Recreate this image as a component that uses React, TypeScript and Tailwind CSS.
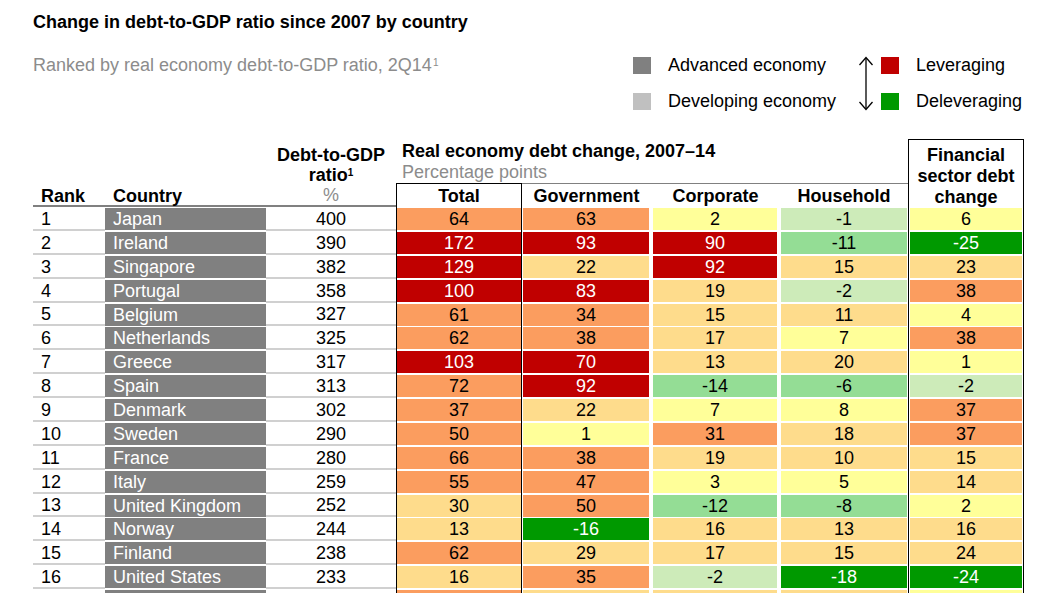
import React from "react";

type Tone = "red" | "orange" | "lorange" | "yellow" | "lgreen" | "mgreen" | "dgreen";

const TONES: Record<Tone, string> = {
  red: "bg-[#c00000] text-white",
  orange: "bg-[#fb9d5f] text-black",
  lorange: "bg-[#fedc8c] text-black",
  yellow: "bg-[#ffff99] text-black",
  lgreen: "bg-[#cdebb9] text-black",
  mgreen: "bg-[#94dd95] text-black",
  dgreen: "bg-[#009900] text-white",
};

function toneFor(v: number, redFrom = 70): Tone {
  if (v >= redFrom) return "red";
  if (v >= 31) return "orange";
  if (v >= 10) return "lorange";
  if (v >= 1) return "yellow";
  if (v >= -5) return "lgreen";
  if (v >= -15) return "mgreen";
  return "dgreen";
}

// rank, country, ratio, total, government, corporate, household, financial
const rows: [number, string, number, number, number, number, number, number][] = [
  [1, "Japan", 400, 64, 63, 2, -1, 6],
  [2, "Ireland", 390, 172, 93, 90, -11, -25],
  [3, "Singapore", 382, 129, 22, 92, 15, 23],
  [4, "Portugal", 358, 100, 83, 19, -2, 38],
  [5, "Belgium", 327, 61, 34, 15, 11, 4],
  [6, "Netherlands", 325, 62, 38, 17, 7, 38],
  [7, "Greece", 317, 103, 70, 13, 20, 1],
  [8, "Spain", 313, 72, 92, -14, -6, -2],
  [9, "Denmark", 302, 37, 22, 7, 8, 37],
  [10, "Sweden", 290, 50, 1, 31, 18, 37],
  [11, "France", 280, 66, 38, 19, 10, 15],
  [12, "Italy", 259, 55, 47, 3, 5, 14],
  [13, "United Kingdom", 252, 30, 50, -12, -8, 2],
  [14, "Norway", 244, 13, -16, 16, 13, 16],
  [15, "Finland", 238, 62, 29, 17, 15, 24],
  [16, "United States", 233, 16, 35, -2, -18, -24],
  [17, "South Korea", 231, 45, 16, 14, 15, 2],
];

function Cell({ v, redFrom, className }: { v: number; redFrom?: number; className: string }) {
  return (
    <div className={`flex flex-col pt-[1px] pb-[2px] ${className}`}>
      <div className={`flex flex-1 items-center justify-center pt-[1px] leading-[21px] ${TONES[toneFor(v, redFrom)]}`}>{v}</div>
    </div>
  );
}

function Arrow() {
  return (
    <svg width="16" height="57" viewBox="0 0 16 57" className="shrink-0">
      <path d="M8 3 V54" stroke="#000" strokeWidth="1.3" fill="none" />
      <path d="M1.5 10 L8 2.5 L14.5 10" stroke="#000" strokeWidth="1.3" fill="none" />
      <path d="M1.5 47 L8 54.5 L14.5 47" stroke="#000" strokeWidth="1.3" fill="none" />
    </svg>
  );
}

export default function App() {
  return (
    <div className="h-[593px] w-[1047px] overflow-hidden bg-white font-['Liberation_Sans',Arial,sans-serif] text-[18px] text-black">
      <div className="pl-[33px] pt-[12px]">
        <h1 className="font-bold leading-[21px]">Change in debt-to-GDP ratio since 2007 by country</h1>

        <div className="mt-[22px] flex">
          <p className="w-[600px] leading-[21px] text-[#8c8c8c]">
            Ranked by real economy debt-to-GDP ratio, 2Q14
            <sup className="ml-[1px] text-[10px]">1</sup>
          </p>
          <div className="flex w-[225px] flex-col gap-[15px]">
            <div className="flex h-[21px] items-center">
              <span className="h-[17px] w-[18px] bg-[#808080]" />
              <span className="ml-[17px] leading-[21px]">Advanced economy</span>
            </div>
            <div className="flex h-[21px] items-center">
              <span className="h-[17px] w-[18px] bg-[#c0c0c0]" />
              <span className="ml-[17px] leading-[21px]">Developing economy</span>
            </div>
          </div>
          <Arrow />
          <div className="ml-[7px] flex flex-col gap-[15px]">
            <div className="flex h-[21px] items-center">
              <span className="h-[17px] w-[18px] bg-[#c00000]" />
              <span className="ml-[17px] leading-[21px]">Leveraging</span>
            </div>
            <div className="flex h-[21px] items-center">
              <span className="h-[17px] w-[18px] bg-[#009900]" />
              <span className="ml-[17px] leading-[21px]">Deleveraging</span>
            </div>
          </div>
        </div>

        {/* table header */}
        <div className="mt-[27px] flex h-[68px]">
          <div className="flex w-[72px] items-end border-b-2 border-[#808080] pl-[8px] font-bold leading-[18px]">Rank</div>
          <div className="flex w-[161px] items-end border-b-2 border-[#808080] pl-[8px] font-bold leading-[18px]">Country</div>
          <div className="flex w-[130px] flex-col items-center justify-end border-b-2 border-[#808080] leading-[20px]">
            <span className="font-bold">Debt-to-GDP</span>
            <span className="font-bold">
              ratio<sup className="text-[10px]">1</sup>
            </span>
            <span className="text-[#8c8c8c]">%</span>
          </div>
          <div className="flex w-[512px] flex-col">
            <div className="h-[44px] pl-[6px] pt-[2px] leading-[21px]">
              <div className="font-bold">Real economy debt change, 2007–14</div>
              <div className="text-[#8c8c8c]">Percentage points</div>
            </div>
            <div className="flex h-[24px] pt-[1px] font-bold leading-[22px]">
              <div className="-mt-[1px] w-[126px] border-x border-t border-black pt-[1px] text-center">Total</div>
              <div className="-mt-[1px] w-[129px] border-t border-[#808080] pt-[1px] text-center">Government</div>
              <div className="-mt-[1px] w-[129px] border-t border-[#808080] pt-[1px] text-center">Corporate</div>
              <div className="-mt-[1px] w-[128px] border-t border-[#808080] pt-[1px] text-center">Household</div>
            </div>
          </div>
          <div className="flex w-[116px] flex-col items-center border-x border-t border-black pt-[4.5px] font-bold leading-[21px]">
            <span>Financial</span>
            <span>sector debt</span>
            <span>change</span>
          </div>
        </div>

        {/* table body */}
        {rows.map(([rank, country, ratio, total, gov, corp, house, fin]) => (
          <div key={rank} className="flex h-[23.875px]">
            <div className="flex w-[72px] items-center border-b-2 border-[#d0d0d0] pl-[8px] pt-[3px] leading-[21px]">{rank}</div>
            <div className="flex w-[161px] flex-col pt-[1px] pb-[2px]">
              <div className="flex flex-1 items-center bg-[#808080] pl-[8px] pt-[1px] leading-[21px] text-white">{country}</div>
            </div>
            <div className="flex w-[130px] items-center justify-center border-b-2 border-[#d0d0d0] pt-[3px] leading-[21px]">{ratio}</div>
            <Cell v={total} redFrom={100} className="w-[126px] border-x border-black" />
            <Cell v={gov} className="w-[129px] pl-[1px] pr-[2px]" />
            <Cell v={corp} className="w-[129px] pl-[2px] pr-[3px]" />
            <Cell v={house} className="w-[128px] pl-[1px] pr-[1px]" />
            <Cell v={fin} className="w-[116px] border-x border-black px-[1px]" />
          </div>
        ))}
      </div>
    </div>
  );
}
